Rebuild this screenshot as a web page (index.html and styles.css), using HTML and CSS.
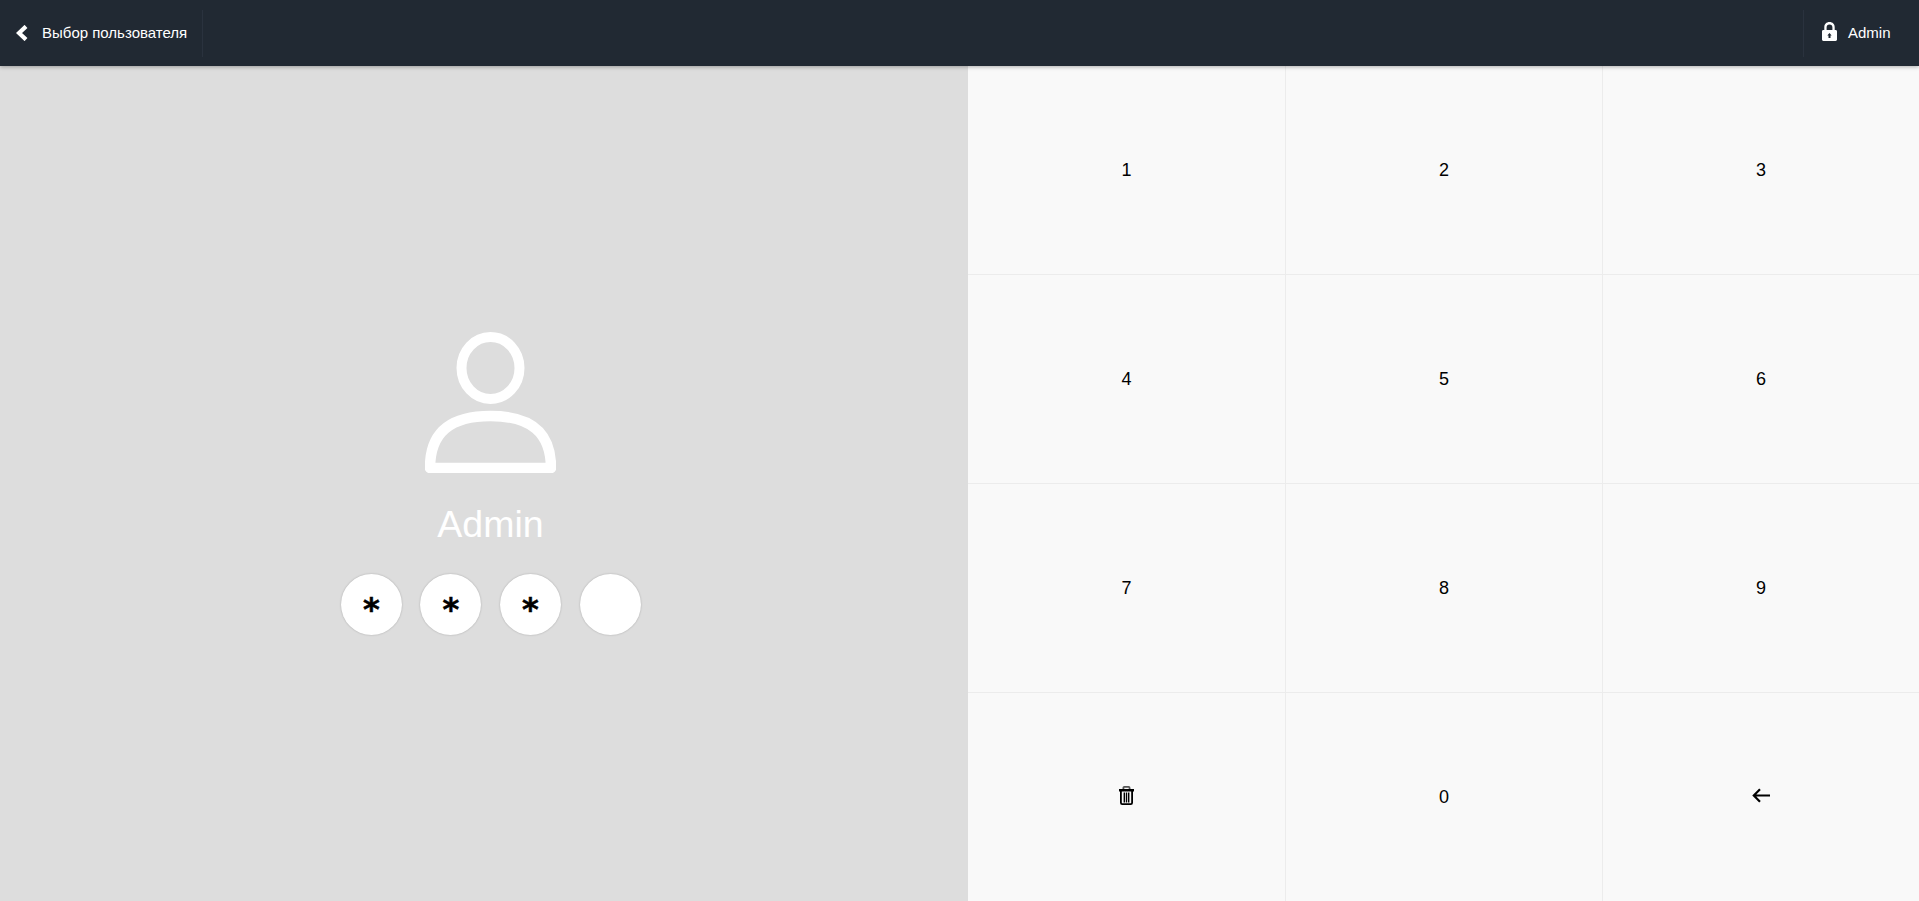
FILE: index.html
```html
<!DOCTYPE html>
<html lang="ru">
<head>
<meta charset="utf-8">
<title>Выбор пользователя</title>
<link rel="stylesheet" href="styles.css">
</head>
<body>
<header class="navbar">
  <a class="nav-item nav-back">
    <svg class="icon-chevron" viewBox="0 0 12 16"><path d="M10 1.400 3 8l7 6.600" fill="none" stroke="#fff" stroke-width="4.200"/></svg>
    <span>Выбор пользователя</span>
  </a>
  <a class="nav-item nav-user">
    <svg class="icon-lock" viewBox="0 0 15 19"><path fill="#fff" fill-rule="evenodd" d="M7.500 0C4.300 0 2.300 2.200 2.300 5.200V8H1.400C.6 8 0 8.600 0 9.400v8.200C0 18.400.6 19 1.400 19h12.200c.8 0 1.400-.6 1.400-1.400V9.400C15 8.600 14.400 8 13.600 8h-.9V5.200C12.700 2.200 10.700 0 7.500 0Zm0 2.400c1.900 0 2.900 1.200 2.900 3V8H4.600V5.400c0-1.800 1-3 2.900-3ZM7.500 11 9.700 13.500H8.500V16h-2V13.500H5.300Z"/></svg>
    <span>Admin</span>
  </a>
</header>
<main class="screen">
  <section class="user-panel">
    <svg class="avatar" viewBox="0 0 131 141"><ellipse cx="65.500" cy="36" rx="29" ry="31" fill="none" stroke="#fff" stroke-width="10"/><path d="M5 136C5 100 26 84 65.500 84S126 100 126 136Z" fill="none" stroke="#fff" stroke-width="10.500" stroke-linejoin="round"/></svg>
    <h1 class="user-name">Admin</h1>
    <div class="pin-dots">
      <div class="pin-dot">*</div>
      <div class="pin-dot">*</div>
      <div class="pin-dot">*</div>
      <div class="pin-dot"></div>
    </div>
  </section>
  <section class="keypad">
    <button class="key">1</button>
    <button class="key">2</button>
    <button class="key">3</button>
    <button class="key">4</button>
    <button class="key">5</button>
    <button class="key">6</button>
    <button class="key">7</button>
    <button class="key">8</button>
    <button class="key">9</button>
    <button class="key" aria-label="Очистить">
      <svg class="icon-trash" viewBox="0 0 15 19"><path fill="none" stroke="#555" stroke-width="1.800" d="M4.400 3.500V1.900C4.400 1.300 4.800.9 5.400.9h4.200c.6 0 1 .4 1 1v1.600"/><path fill="#000" d="M0 3h15v2.500H0z"/><path fill="none" stroke="#000" stroke-width="1.800" d="M1.900 5v11.800c0 .8.500 1.300 1.300 1.300h8.600c.8 0 1.300-.5 1.300-1.300V5"/><path fill="none" stroke="#000" stroke-width="1.400" d="M5.300 6.500V16.500M7.500 6.500V16.500M9.700 6.500V16.500"/></svg>
    </button>
    <button class="key">0</button>
    <button class="key" aria-label="Удалить">
      <svg class="icon-arrow" viewBox="0 0 18 15"><path fill="none" stroke="#000" stroke-width="2.200" d="M8 1.200 1.800 7.500 8 13.800M2 7.500H18"/></svg>
    </button>
  </section>
</main>
</body>
</html>
```
FILE: styles.css
```css
* { box-sizing: border-box; }
html, body { height: 100%; margin: 0; }
body {
  display: flex;
  flex-direction: column;
  height: 901px;
  overflow: hidden;
  font-family: "Liberation Sans", Arial, sans-serif;
  background: #f9f9f9;
}
.navbar {
  position: relative;
  z-index: 2;
  flex: 0 0 66px;
  display: flex;
  justify-content: space-between;
  align-items: center;
  padding: 0;
  background: #212933;
  color: #fff;
  font-size: 15px;
  box-shadow: 0 1px 4px rgba(0, 0, 0, .3);
}
.nav-item {
  display: flex;
  align-items: center;
  height: 47px;
}
.nav-item span { margin-top: -1px; }
.nav-back {
  width: 203px;
  padding-left: 16px;
  border-right: 1px solid #2a323e;
}
.nav-user {
  width: 116px;
  padding-left: 18px;
  border-left: 1px solid #2a323e;
}
.icon-chevron { width: 12px; height: 16px; margin: 0 14px 0 0; }
.icon-lock { width: 15px; height: 19px; margin: -4px 11px 0 0; }
.screen { flex: 1; display: flex; min-height: 0; }
.user-panel {
  flex: 0 0 968px;
  display: flex;
  flex-direction: column;
  align-items: center;
  justify-content: center;
  padding-left: 13px;
  background: #ddd;
}
.avatar { width: 131px; height: 141px; display: block; }
.user-name {
  margin: 29px 0 28px;
  color: #fff;
  font-size: 37.5px;
  font-weight: 400;
  line-height: 44px;
}
.pin-dots { display: flex; gap: 18.6px; margin-left: .4px; }
.pin-dot {
  width: 61px;
  height: 61px;
  display: flex;
  align-items: center;
  justify-content: center;
  border-radius: 50%;
  background: #fff;
  box-shadow: 0 0 2px rgba(0, 0, 0, .25);
  color: #000;
  font-family: "DejaVu Sans", sans-serif;
  font-size: 32px;
  font-weight: 700;
  -webkit-text-stroke: .5px #000;
  line-height: 1;
  padding-top: 8px;
}
.keypad {
  flex: 1;
  display: grid;
  grid-template-columns: repeat(3, 1fr);
  grid-template-rows: 209px 209px 209px 208px;
}
.key {
  display: flex;
  align-items: center;
  justify-content: center;
  padding: 0;
  border: 0;
  border-bottom: 1px solid #ececec;
  background: #f9f9f9;
  color: #000;
  font: 18px "Liberation Sans", Arial, sans-serif;
}
.key:not(:nth-child(3n+1)) { border-left: 1px solid #ececec; }
.key:nth-last-child(-n+3) { border-bottom: 0; }
.icon-trash { width: 15px; height: 19px; margin-bottom: 4px; }
.icon-arrow { width: 18px; height: 15px; margin-bottom: 4px; }
```
